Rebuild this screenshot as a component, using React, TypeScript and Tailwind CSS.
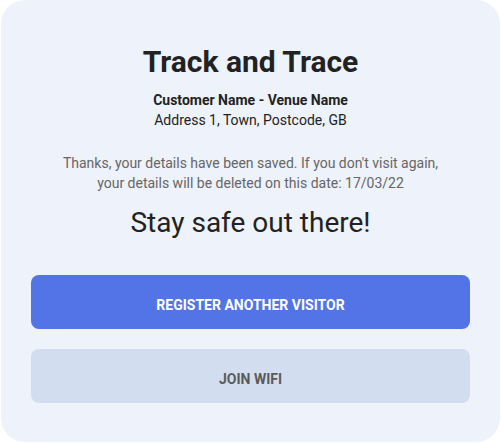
export default function App() {
  return (
    <div className="w-[501px] h-[443px] bg-white pl-px font-['Roboto',sans-serif]">
      <div className="w-[499px] h-[442px] bg-[#eef2fb] rounded-[24px] px-[30px] pt-[43px] flex flex-col items-center">
        <h1 className="text-[30px] leading-[38px] font-bold text-[#222222]">
          Track and Trace
        </h1>
        <div className="mt-[9px] text-center text-[14px] leading-[20px] text-[#222222]">
          <p className="font-bold">Customer Name - Venue Name</p>
          <p>Address 1, Town, Postcode, GB</p>
        </div>
        <p className="mt-[23px] text-center text-[14px] leading-[20px] text-[#666666]">
          Thanks, your details have been saved. If you don't visit again,
          <br />
          your details will be deleted on this date: 17/03/22
        </p>
        <p className="mt-[12px] text-[28px] leading-[36px] text-[#222222]">
          Stay safe out there!
        </p>
        <button className="mt-[34px] w-full h-[54px] pt-[6px] rounded-[8px] bg-[#5274e6] text-white text-[14px] font-bold uppercase">
          Register another visitor
        </button>
        <button className="mt-[20px] w-full h-[54px] pt-[6px] rounded-[8px] bg-[#d3ddf0] text-[#5a5a5a] text-[14px] font-bold uppercase">
          Join wifi
        </button>
      </div>
    </div>
  );
}
